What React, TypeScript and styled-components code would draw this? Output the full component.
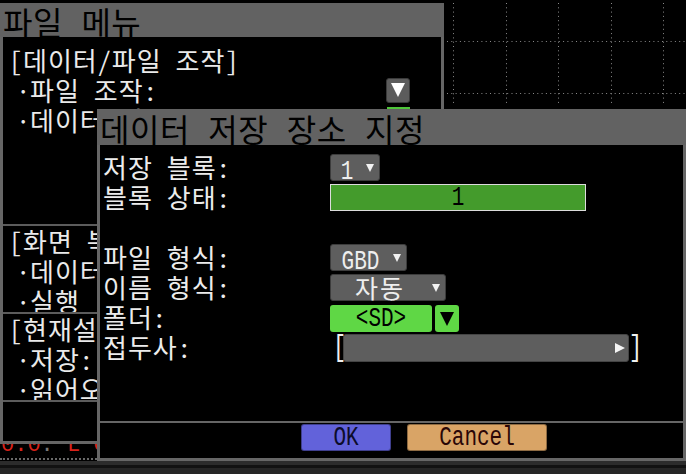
import React from "react";
import styled, { createGlobalStyle } from "styled-components";

const GlobalStyle = createGlobalStyle`
  html, body {
    margin: 0;
    padding: 0;
    background: #000;
  }
  body {
    font-family: "Noto Sans Mono CJK KR", "Noto Sans CJK KR", "DejaVu Sans", sans-serif;
  }
`;

const App = () => {
  return (
    <>
      <GlobalStyle />
      <Screen>
        <Scope>
          <svg width="242" height="109" viewBox="0 0 242 109">
            {[9, 62, 114, 167, 219].map((x) => (
              <line key={x} x1={x + 0.5} y1={3} x2={x + 0.5} y2={106} stroke="#8a8a8a" strokeDasharray="1 3.3" />
            ))}
            {[41, 93].map((y) => (
              <line key={y} x1={3} y1={y + 0.5} x2={242} y2={y + 0.5} stroke="#8a8a8a" strokeDasharray="1 3.3" />
            ))}
          </svg>
        </Scope>

        <StatusStrip>
          <Red>0.0</Red>
          <Dim>:</Dim>
          <Red> L C </Red>
          <Dim>:</Dim>
        </StatusStrip>

        <MenuWindow>
          <TitleBar $height={34}>파일 메뉴</TitleBar>
          <WindowBody>
            <MenuSection $height={189} $padTop={8}>
              <MenuLine>[데이터/파일 조작]</MenuLine>
              <MenuLine $bullet>
                <span>
                  <Dot>·</Dot>파일 조작:
                </span>
                <DropButton>
                  <Triangle $color="#fff" $size={7} />
                </DropButton>
              </MenuLine>
              <MenuLine $bullet>
                <span>
                  <Dot>·</Dot>데이터 저장 장소:
                </span>
                <HiddenGreen />
              </MenuLine>
            </MenuSection>
            <MenuSection $height={88} $padTop={0}>
              <MenuLine>[화면 복사]</MenuLine>
              <MenuLine $bullet>
                <span>
                  <Dot>·</Dot>데이터 저장:
                </span>
              </MenuLine>
              <MenuLine $bullet>
                <span>
                  <Dot>·</Dot>실행
                </span>
              </MenuLine>
            </MenuSection>
            <MenuSection $height={88} $padTop={0}>
              <MenuLine>[현재설정]</MenuLine>
              <MenuLine $bullet>
                <span>
                  <Dot>·</Dot>저장:
                </span>
              </MenuLine>
              <MenuLine $bullet>
                <span>
                  <Dot>·</Dot>읽어오기:
                </span>
              </MenuLine>
            </MenuSection>
            <MenuSection $height={33} $padTop={0} $last />
          </WindowBody>
        </MenuWindow>

        <Dialog>
          <TitleBar $height={36}>데이터 저장 장소 지정</TitleBar>
          <WindowBody>
            <Form>
              <Label>저장 블록:</Label>
              <Select $width={50}>
                <SelectText>
                  <Latin>1</Latin>
                </SelectText>
                <SmallArrow />
              </Select>

              <Label>블록 상태:</Label>
              <BlockBar>
                <Latin>1</Latin>
              </BlockBar>

              <Spacer />

              <Label>파일 형식:</Label>
              <Select $width={77}>
                <SelectText>
                  <Latin>GBD</Latin>
                </SelectText>
                <SmallArrow />
              </Select>

              <Label>이름 형식:</Label>
              <Select $width={116}>
                <SelectText>자동</SelectText>
                <SmallArrow />
              </Select>

              <Label>폴더:</Label>
              <FolderRow>
                <FolderBox>
                  <Latin>&lt;SD&gt;</Latin>
                </FolderBox>
                <FolderArrow>
                  <Triangle $color="#000" $size={7} />
                </FolderArrow>
              </FolderRow>

              <Label>접두사:</Label>
              <PrefixRow>
                <Bracket>[</Bracket>
                <PrefixField>
                  <PlayArrow />
                </PrefixField>
                <Bracket>]</Bracket>
              </PrefixRow>
            </Form>
            <Footer>
              <ActionButton $bg="#6262da" $fg="#0c0c2a" $width={90}>
                <Latin>OK</Latin>
              </ActionButton>
              <ActionButton $bg="#d9a466" $fg="#2a0606" $width={140}>
                <Latin>Cancel</Latin>
              </ActionButton>
            </Footer>
          </WindowBody>
        </Dialog>

        <BottomEdge />
      </Screen>
    </>
  );
};

export default App;

const Screen = styled.div`
  position: relative;
  width: 686px;
  height: 474px;
  overflow: hidden;
  background: #000;
  color: #ececec;
`;

const Scope = styled.div`
  position: absolute;
  left: 444px;
  top: 0;
  width: 242px;
  height: 109px;
  z-index: 0;

  svg {
    display: block;
  }
`;

const StatusStrip = styled.div`
  position: absolute;
  left: 0;
  top: 432px;
  width: 97px;
  height: 28px;
  box-sizing: border-box;
  padding-left: 1px;
  border-bottom: 2px dotted #6a6a6a;
  font-family: "Liberation Mono", monospace;
  font-size: 22px;
  line-height: 28px;
  white-space: pre;
  overflow: hidden;
  z-index: 0;
`;

const Red = styled.span`
  color: #d8221a;
`;

const Dim = styled.span`
  color: #777;
`;

const MenuWindow = styled.div`
  position: absolute;
  left: 0;
  top: 3px;
  width: 444px;
  height: 441px;
  display: flex;
  flex-direction: column;
  z-index: 1;
`;

const Dialog = styled.div`
  position: absolute;
  left: 97px;
  top: 109px;
  width: 589px;
  height: 352px;
  display: flex;
  flex-direction: column;
  z-index: 2;
`;

const TitleBar = styled.div<{ $height: number }>`
  flex: 0 0 ${(p) => p.$height}px;
  height: ${(p) => p.$height}px;
  padding-left: 3px;
  background: #626262;
  color: #000;
  font-size: 32px;
  line-height: ${(p) => p.$height + 2}px;
  letter-spacing: 0.5px;
  word-spacing: 2px;
  white-space: nowrap;
  overflow: hidden;
`;

const WindowBody = styled.div`
  flex: 1;
  display: flex;
  flex-direction: column;
  min-height: 0;
  background: #000;
  border: 3px solid #666;
  border-top: none;
`;

const MenuSection = styled.div<{ $height: number; $padTop: number; $last?: boolean }>`
  flex: 0 0 ${(p) => p.$height}px;
  height: ${(p) => p.$height}px;
  box-sizing: border-box;
  padding-top: ${(p) => p.$padTop}px;
  border-bottom: ${(p) => (p.$last ? "none" : "2px solid #5c5c5c")};
  overflow: hidden;
`;

const MenuLine = styled.div<{ $bullet?: boolean }>`
  display: flex;
  align-items: center;
  justify-content: space-between;
  height: 30px;
  padding-left: ${(p) => (p.$bullet ? 13 : 6)}px;
  padding-right: 31px;
  font-size: 26px;
  line-height: 30px;
  letter-spacing: 1px;
  white-space: nowrap;
  color: #eaeaea;
`;

const Dot = styled.span`
  display: inline-block;
  width: 14px;
  text-align: center;
`;

const DropButton = styled.div`
  display: flex;
  align-items: center;
  justify-content: center;
  width: 24px;
  height: 25px;
  box-sizing: border-box;
  background: #5c5c5c;
  border: 1px solid #3a3a3a;
  border-radius: 3px;
`;

const HiddenGreen = styled.div`
  align-self: flex-start;
  width: 23px;
  height: 20px;
  margin-top: 2px;
  background: #4fc63a;
`;

const Triangle = styled.span<{ $color: string; $size: number }>`
  display: block;
  width: 0;
  height: 0;
  border-left: ${(p) => p.$size}px solid transparent;
  border-right: ${(p) => p.$size}px solid transparent;
  border-top: ${(p) => p.$size * 2}px solid ${(p) => p.$color};
`;

const Form = styled.div`
  flex: 0 0 278px;
  box-sizing: border-box;
  display: grid;
  grid-template-columns: 227px 1fr;
  grid-auto-rows: 30px;
  align-content: start;
  padding: 7px 0 0 3px;
  border-bottom: 2px solid #666;
`;

const Label = styled.div`
  font-size: 26px;
  line-height: 30px;
  letter-spacing: 1px;
  color: #ececec;
  white-space: nowrap;
`;

const Spacer = styled.div`
  grid-column: 1 / span 2;
`;

const Latin = styled.span`
  display: inline-block;
  font-family: "Liberation Mono", "DejaVu Sans Mono", monospace;
  font-size: 21px;
  line-height: 21px;
  letter-spacing: 0;
  transform: scaleY(1.35);
`;

const Select = styled.div<{ $width: number }>`
  align-self: start;
  display: flex;
  align-items: center;
  width: ${(p) => p.$width}px;
  height: 27px;
  margin-top: 2px;
  box-sizing: border-box;
  background: #5e5e5e;
  border: 1px solid #3c3c3c;
  border-radius: 3px;
  color: #eeeeee;
  font-size: 25px;
  letter-spacing: 2px;
`;

const SelectText = styled.span`
  flex: 1;
  text-align: center;
  line-height: 25px;
  padding-left: 2px;
`;

const SmallArrow = styled.span`
  flex: 0 0 auto;
  width: 0;
  height: 0;
  margin: 0 5px;
  border-left: 4px solid transparent;
  border-right: 4px solid transparent;
  border-top: 8px solid #f2f2f2;
`;

const BlockBar = styled.div`
  align-self: start;
  display: flex;
  align-items: center;
  justify-content: center;
  width: 256px;
  height: 27px;
  margin-top: 2px;
  box-sizing: border-box;
  background: #449b2c;
  border: 1px solid #dcdcdc;
  color: #000;
`;

const FolderRow = styled.div`
  align-self: start;
  display: flex;
  gap: 3px;
  height: 27px;
  margin-top: 3px;
`;

const FolderBox = styled.div`
  display: flex;
  align-items: center;
  justify-content: center;
  width: 102px;
  background: #5fd745;
  border-radius: 3px;
  color: #000;
`;

const FolderArrow = styled.div`
  display: flex;
  align-items: center;
  justify-content: center;
  width: 24px;
  background: #5fd745;
  border-radius: 3px;
`;

const PrefixRow = styled.div`
  align-self: start;
  display: flex;
  align-items: center;
  height: 28px;
  margin-top: 2px;
  padding-left: 3px;
  color: #f0f0f0;
`;

const Bracket = styled.span`
  display: inline-block;
  width: 10px;
  text-align: center;
  font-family: "Liberation Mono", monospace;
  font-size: 22px;
  transform: scaleY(1.3);
`;

const PrefixField = styled.div`
  display: flex;
  align-items: center;
  justify-content: flex-end;
  width: 286px;
  height: 28px;
  box-sizing: border-box;
  padding-right: 3px;
  background: #5e5e5e;
  border: 1px solid #444;
  border-radius: 3px;
`;

const PlayArrow = styled.span`
  width: 0;
  height: 0;
  border-top: 5px solid transparent;
  border-bottom: 5px solid transparent;
  border-left: 10px solid #f4f4f4;
`;

const Footer = styled.div`
  flex: 1;
  display: flex;
  align-items: flex-start;
  gap: 16px;
  padding: 1px 0 0 201px;
`;

const ActionButton = styled.div<{ $bg: string; $fg: string; $width: number }>`
  display: flex;
  align-items: center;
  justify-content: center;
  width: ${(p) => p.$width}px;
  height: 27px;
  box-sizing: border-box;
  background: ${(p) => p.$bg};
  border: 1px solid rgba(0, 0, 0, 0.35);
  border-radius: 3px;
  color: ${(p) => p.$fg};
`;

const BottomEdge = styled.div`
  position: absolute;
  left: 0;
  bottom: 0;
  width: 686px;
  height: 13px;
  background: linear-gradient(
    to bottom,
    #2c2c2c 0,
    #2c2c2c 4px,
    #121212 4px,
    #121212 7px,
    #262626 7px
  );
  z-index: 3;
`;
